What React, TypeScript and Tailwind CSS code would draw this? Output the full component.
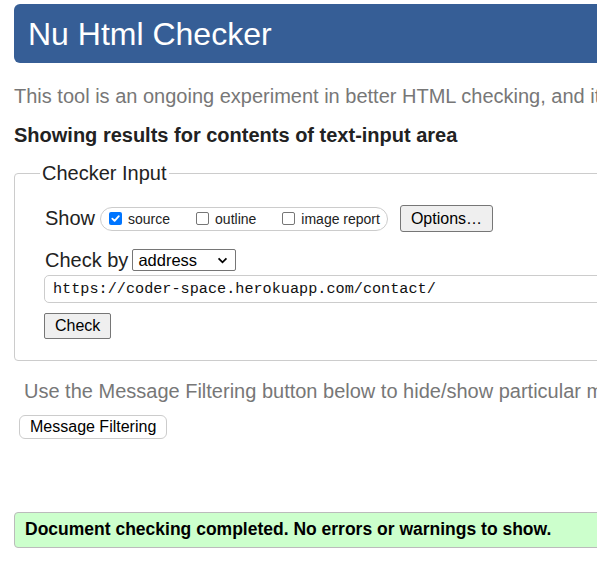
import { useState } from 'react';

function Box({ checked, label }: { checked: boolean; label: string }) {
  return (
    <label className="flex items-center">
      {checked ? (
        <span className="flex h-[13px] w-[13px] items-center justify-center rounded-[2px] bg-[#0075ff]">
          <svg viewBox="0 0 12 12" className="h-[11px] w-[11px]" fill="none" stroke="#fff" strokeWidth="2" strokeLinecap="round" strokeLinejoin="round">
            <path d="M2.5 6.2 5 8.6 9.6 3.4" />
          </svg>
        </span>
      ) : (
        <span className="h-[13px] w-[13px] rounded-[2px] border border-[#767676] bg-white" />
      )}
      <span className="ml-[6px] text-[14px] leading-[16px] text-[#222]">{label}</span>
    </label>
  );
}

export default function App() {
  const [url, setUrl] = useState('https://coder-space.herokuapp.com/contact/');

  return (
    <div className="h-[561px] w-full overflow-hidden bg-white font-['Liberation_Sans',Arial,sans-serif]">
      <div className="w-[1100px] pl-[14px]">
        <header className="mt-[4px] flex h-[59px] items-center rounded-md bg-[#365e96] pl-[14px]">
          <h1 className="text-[32px] leading-none text-white">Nu Html Checker</h1>
        </header>

        <p className="mt-[22px] whitespace-nowrap text-[20px] leading-[23px] text-[#777]">
          This tool is an ongoing experiment in better HTML checking, and its behavior remains subject to change
        </p>

        <h2 className="mt-[16px] text-[20px] font-bold leading-[23px] text-[#222]">
          Showing results for contents of text-input area
        </h2>

        <fieldset className="mt-[15px] rounded-[4px] border border-[#ccc] pb-[21px] pl-[30px]">
          <legend className="ml-[-5px] px-[2px] text-[20px] leading-[23px] text-[#222]">Checker Input</legend>

          <div className="mt-[20px] flex h-[27px] items-center">
            <span className="mr-[5px] text-[20px] leading-[23px] text-[#222]">Show</span>
            <div className="flex h-[24px] items-center gap-[26px] rounded-full border border-[#ccc] pl-[8px] pr-[7px]">
              <Box checked label="source" />
              <Box checked={false} label="outline" />
              <Box checked={false} label="image report" />
            </div>
            <button className="ml-[12px] h-[27px] rounded-[3px] border border-[#767676] bg-[#efefef] px-[10px] text-[16px] text-black">
              Options…
            </button>
          </div>

          <div className="mt-[16px] flex h-[24px] items-center">
            <span className="mr-[4px] text-[20px] leading-[23px] text-[#222]">Check by</span>
            <div className="flex h-[22px] w-[104px] items-center justify-between rounded-[2px] border border-[#767676] bg-white pl-[5px] pr-[7px]">
              <span className="text-[16.5px] leading-none text-black">address</span>
              <svg viewBox="0 0 12 8" className="h-[7px] w-[11px]" fill="none" stroke="#000" strokeWidth="2">
                <path d="M1.5 1.5 6 6l4.5-4.5" />
              </svg>
            </div>
          </div>

          <input
            value={url}
            onChange={(e) => setUrl(e.target.value)}
            className="mt-[3px] ml-[-1px] block h-[28px] w-[900px] rounded-[5px] border border-[#ccc] bg-white pl-[8px] font-['Liberation_Mono','DejaVu_Sans_Mono',monospace] text-[15.2px] text-[#111] outline-none"
          />

          <button className="mt-[10px] ml-[-1px] block h-[26px] rounded-[2px] border border-[#767676] bg-[#efefef] px-[10px] text-[16px] text-black">
            Check
          </button>
        </fieldset>

        <p className="mt-[19px] whitespace-nowrap pl-[10px] text-[20px] leading-[23px] text-[#777]">
          Use the Message Filtering button below to hide/show particular messages, and to see total counts of errors and warnings.
        </p>

        <button className="ml-[5px] mt-[12px] block h-[24px] rounded-[6px] border border-[#ccc] bg-white px-[10px] text-[16px] leading-none text-black">
          Message Filtering
        </button>

        <div className="mt-[73px] flex h-[36px] items-center rounded-[4px] border border-[#bbb] bg-[#ccffcc] pl-[10px]">
          <p className="text-[17.5px] font-bold leading-none text-black">
            Document checking completed. No errors or warnings to show.
          </p>
        </div>
      </div>
    </div>
  );
}
